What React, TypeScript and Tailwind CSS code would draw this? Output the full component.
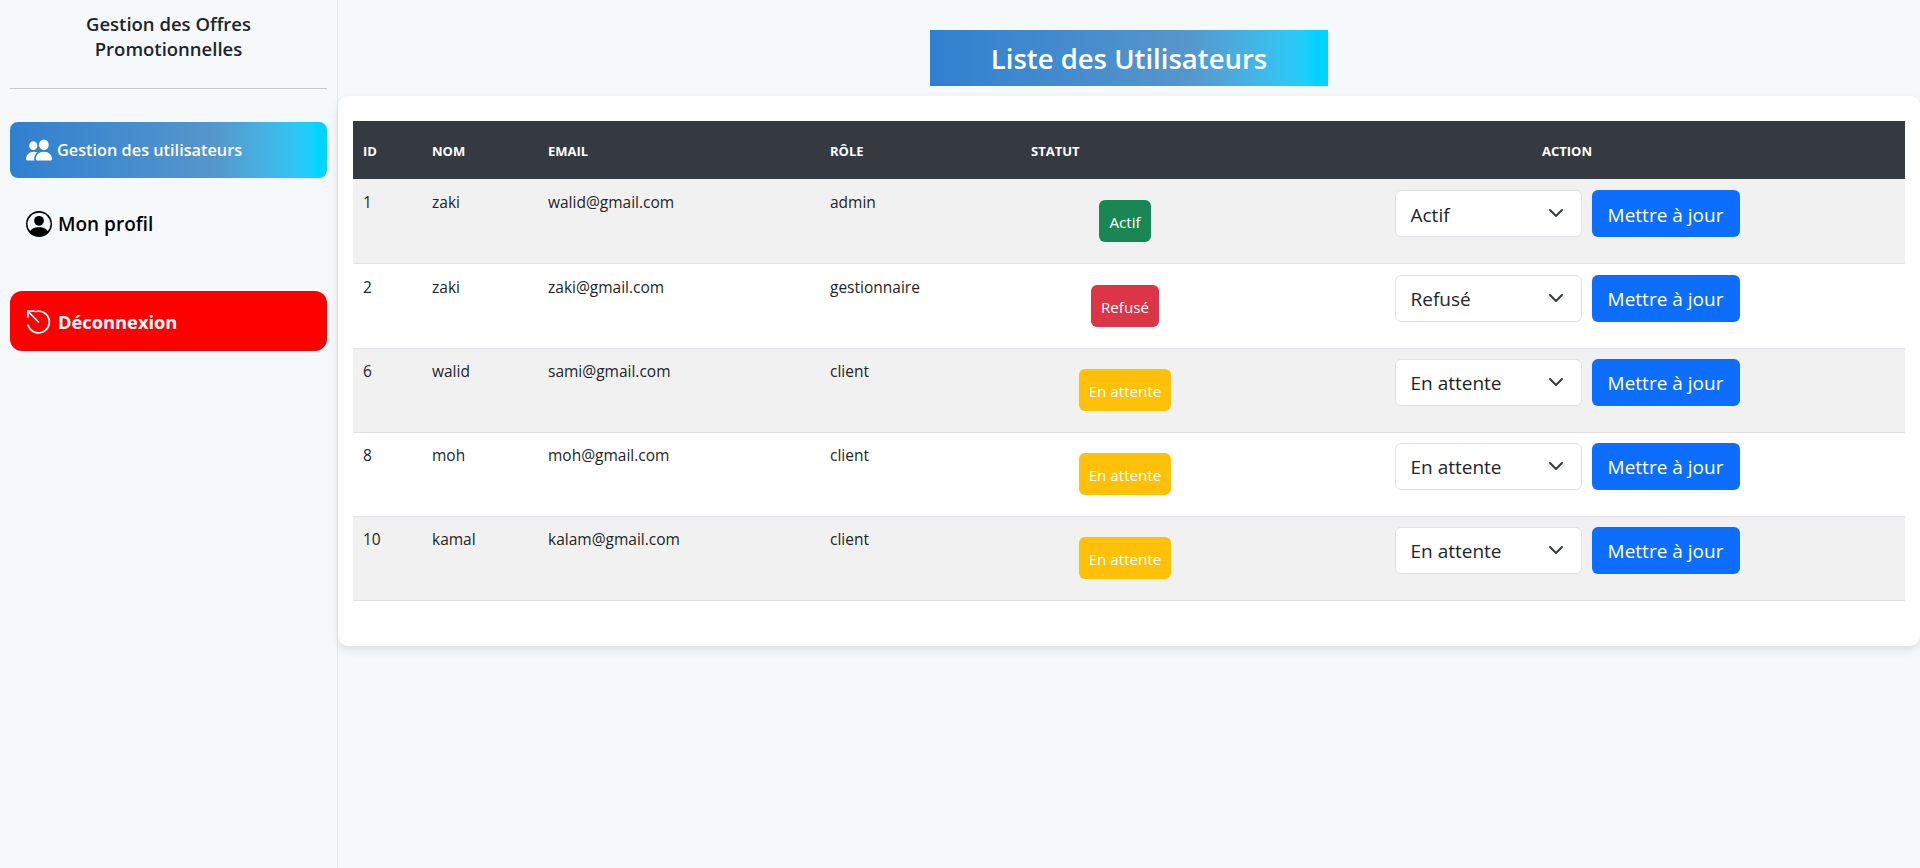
import React from "react";

const rows = [
  { id: 1, nom: "zaki", email: "walid@gmail.com", role: "admin", statut: "Actif", cls: "bg-[#198754]" },
  { id: 2, nom: "zaki", email: "zaki@gmail.com", role: "gestionnaire", statut: "Refusé", cls: "bg-[#dc3545]" },
  { id: 6, nom: "walid", email: "sami@gmail.com", role: "client", statut: "En attente", cls: "bg-[#ffc107]" },
  { id: 8, nom: "moh", email: "moh@gmail.com", role: "client", statut: "En attente", cls: "bg-[#ffc107]" },
  { id: 10, nom: "kamal", email: "kalam@gmail.com", role: "client", statut: "En attente", cls: "bg-[#ffc107]" },
];

function Users() {
  return (
    <svg width="26" height="28" viewBox="0 0 16 16" preserveAspectRatio="none" fill="currentColor" className="shrink-0">
      <path d="M7 14s-1 0-1-1 1-4 5-4 5 3 5 4-1 1-1 1H7Zm4-6a3 3 0 1 0 0-6 3 3 0 0 0 0 6Zm-5.784 6A2.238 2.238 0 0 1 5 13c0-1.355.68-2.75 1.936-3.72A6.325 6.325 0 0 0 5 9c-4 0-5 3-5 4s1 1 1 1h4.216ZM4.5 8a2.5 2.5 0 1 0 0-5 2.5 2.5 0 0 0 0 5Z" />
    </svg>
  );
}

function Profile() {
  return (
    <svg width="26" height="26" viewBox="0 0 16 16" fill="currentColor" className="shrink-0">
      <path d="M11 6a3 3 0 1 1-6 0 3 3 0 0 1 6 0z" />
      <path fillRule="evenodd" d="M0 8a8 8 0 1 1 16 0A8 8 0 0 1 0 8zm8-7a7 7 0 0 0-5.468 11.37C3.242 11.226 4.805 10 8 10s4.757 1.225 5.468 2.37A7 7 0 0 0 8 1z" />
    </svg>
  );
}

function Logout() {
  return (
    <svg width="26" height="26" viewBox="0 0 26 26" fill="none" stroke="currentColor" strokeWidth="1.7" strokeLinecap="round" strokeLinejoin="round" className="shrink-0">
      <path d="M9.5 2.5A10.9 10.9 0 1 1 2 16" />
      <path d="M1.9 2.2L12.5 13" />
      <path d="M1.9 8V2.2H8" />
    </svg>
  );
}

function Chevron() {
  return (
    <svg width="16" height="16" viewBox="0 0 16 16" fill="none" stroke="#343a40" strokeWidth="2" strokeLinecap="round" strokeLinejoin="round" className="absolute right-[17px] top-[14px] pointer-events-none">
      <path d="m2 5 6 6 6-6" />
    </svg>
  );
}

export default function App() {
  return (
    <div className="flex min-h-[868px] bg-[#f6f9fc] text-[#212529] font-['Open_Sans','Noto_Sans',sans-serif]">
      <aside className="w-[338px] shrink-0 border-r border-[#e5e8ec] px-[10px]">
        <div className="pt-[12px] h-[89px] border-b border-[#c4c8cc]">
          <h2 className="text-center text-[18.5px] leading-[24.5px] font-semibold">Gestion des Offres<br />Promotionnelles</h2>
        </div>
        <a className="mt-[33px] h-[56px] flex items-center gap-[5px] pl-[16px] rounded-[8px] text-white text-[16.3px] font-semibold bg-gradient-to-r from-[#2f80d0] via-[#5596cb] via-65% to-[#00d4ff] to-97%">
          <Users />Gestion des utilisateurs
        </a>
        <a className="mt-[18px] h-[56px] flex items-center gap-[6px] pl-[16px] text-black text-[19px] font-semibold">
          <Profile />Mon profil
        </a>
        <a className="mt-[39px] h-[60px] flex items-center gap-[6px] pl-[16px] pt-[1px] rounded-[12px] bg-[#ff0000] text-white text-[18.3px] font-bold">
          <Logout />Déconnexion
        </a>
      </aside>
      <main className="flex-1 min-w-0">
        <div className="flex justify-center pt-[30px] pb-[10px]">
          <h1 className="w-[398px] h-[56px] pt-[2px] flex items-center justify-center text-white text-[27.5px] font-semibold bg-gradient-to-r from-[#2f80d0] via-[#5596cb] via-65% to-[#00d4ff] to-97%">Liste des Utilisateurs</h1>
        </div>
        <div className="bg-white rounded-[10px] px-[15px] pt-[25px] pb-[46px] h-[550px] shadow-[0_4px_10px_rgba(0,0,0,0.1)]">
          <table className="w-[1552px] table-fixed border-collapse text-[15.5px]">
            <colgroup>
              <col className="w-[69px]" />
              <col className="w-[116px]" />
              <col className="w-[282px]" />
              <col className="w-[201px]" />
              <col className="w-[208px]" />
              <col className="w-[676px]" />
            </colgroup>
            <thead>
              <tr className="h-[58px] bg-[#343a40] text-white text-[13px] font-bold uppercase text-left">
                <th className="px-[10px] pt-[4px]">ID</th>
                <th className="px-[10px] pt-[4px]">Nom</th>
                <th className="px-[10px] pt-[4px]">Email</th>
                <th className="px-[10px] pt-[4px]">Rôle</th>
                <th className="px-[10px] pt-[4px]">Statut</th>
                <th className="px-[10px] pt-[4px] text-center">Action</th>
              </tr>
            </thead>
            <tbody>
              {rows.map((r, i) => {
                const up = i >= 2;
                const text = "px-[10px] " + (up ? "pt-[11px]" : "pt-[12px]");
                return (
                  <tr key={r.id} className={(i === 1 ? "h-[85px] " : "h-[84px] ") + "border-b border-[#dee2e6] align-top " + (i % 2 === 0 ? "bg-[#f1f1f1]" : "bg-white")}>
                    <td className={text}>{r.id}</td>
                    <td className={text}>{r.nom}</td>
                    <td className={text}>{r.email}</td>
                    <td className={text}>{r.role}</td>
                    <td className={"px-[10px] text-center " + (up ? "pt-[20px]" : "pt-[21px]")}>
                      <span className={"inline-block h-[42px] leading-[44px] px-[10px] rounded-[6px] text-white text-[15.2px] " + r.cls}>{r.statut}</span>
                    </td>
                    <td className={"px-[10px] " + (up ? "pt-[10px]" : "pt-[11px]")}>
                      <div className="flex justify-center gap-[10px]">
                        <div className="relative w-[187px] h-[47px] bg-white border border-[#dee2e6] rounded-[6px] pl-[15px] pt-[3px] flex items-center text-[19px] leading-none">
                          {r.statut}
                          <Chevron />
                        </div>
                        <button className="w-[148px] h-[47px] pt-[3px] bg-[#0d6efd] text-white rounded-[6px] text-[19px] leading-none">Mettre à jour</button>
                      </div>
                    </td>
                  </tr>
                );
              })}
            </tbody>
          </table>
        </div>
      </main>
    </div>
  );
}
